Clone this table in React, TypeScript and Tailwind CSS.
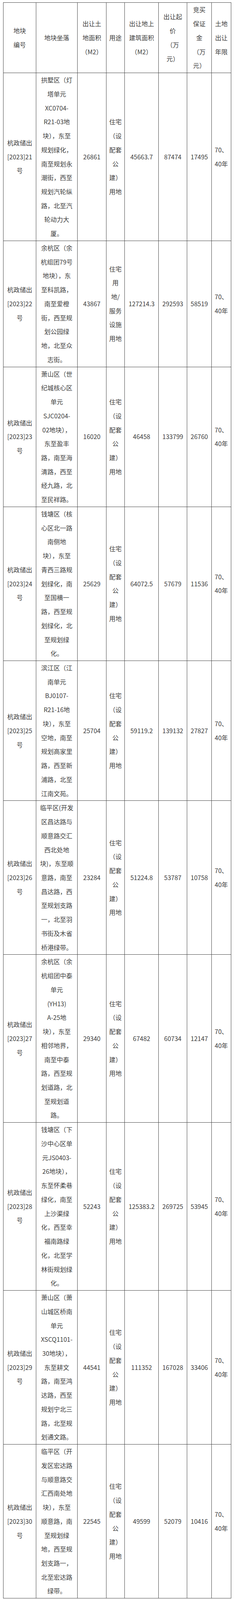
const USE_PUB = ["住宅", "（设", "配套", "公", "建）", "用地"];
const USE_SVC = ["住宅", "用", "地/", "服务", "设施", "用地"];

type Row = {
  no: string;
  loc: string[];
  area: string;
  use: string[];
  build: string;
  price: string;
  deposit: string;
};

// 地块坐落按原图逐行断开
const ROWS: Row[] = [
  {
    no: "21",
    loc: ["拱墅区（灯", "塔单元", "XC0704-", "R21-03地", "块），东至", "规划绿化，", "南至规划永", "潮街，西至", "规划汽轮纵", "路，北至汽", "轮动力大", "厦。"],
    area: "26861", use: USE_PUB, build: "45663.7", price: "87474", deposit: "17495",
  },
  {
    no: "22",
    loc: ["余杭区（余", "杭组团79号", "地块），东", "至科凯路，", "南至爱橙", "街，西至规", "划公园绿", "地，北至众", "志街。"],
    area: "43867", use: USE_SVC, build: "127214.3", price: "292593", deposit: "58519",
  },
  {
    no: "23",
    loc: ["萧山区（世", "纪城核心区", "单元", "SJC0204-", "02地块），", "东至盈丰", "路，南至海", "清路，西至", "经九路，北", "至民祥路。"],
    area: "16020", use: USE_PUB, build: "46458", price: "133799", deposit: "26760",
  },
  {
    no: "24",
    loc: ["钱塘区（核", "心区北一路", "南侧地", "块），东至", "青西三路规", "划绿化，南", "至国横一", "路，西至规", "划绿化，北", "至规划绿", "化。"],
    area: "25629", use: USE_PUB, build: "64072.5", price: "57679", deposit: "11536",
  },
  {
    no: "25",
    loc: ["滨江区（江", "南单元", "BJ0107-", "R21-16地", "块），东至", "空地，南至", "规划高家里", "路，西至新", "浦路，北至", "江南文苑。"],
    area: "25704", use: USE_PUB, build: "59119.2", price: "139132", deposit: "27827",
  },
  {
    no: "26",
    loc: ["临平区(开发", "区昌达路与", "顺意路交汇", "西北处地", "块)，东至顺", "意路，南至", "昌达路，西", "至规划支路", "一，北至羽", "书街及木省", "桥港绿带。"],
    area: "23284", use: USE_PUB, build: "51224.8", price: "53787", deposit: "10758",
  },
  {
    no: "27",
    loc: ["余杭区（余", "杭组团中泰", "单元", "(YH13)", "A-25地", "块），东至", "相邻地界，", "南至中泰", "路，西至规", "划道路，北", "至规划道", "路。"],
    area: "29340", use: USE_PUB, build: "67482", price: "60734", deposit: "12147",
  },
  {
    no: "28",
    loc: ["钱塘区（下", "沙中心区单", "元JS0403-", "26地块），", "东至怀柔巷", "绿化，南至", "上沙渠绿", "化，西至幸", "福南路绿", "化，北至学", "林街规划绿", "化。"],
    area: "52243", use: USE_PUB, build: "125383.2", price: "269725", deposit: "53945",
  },
  {
    no: "29",
    loc: ["萧山区（萧", "山城区桥南", "单元", "XSCQ1101-", "30地块），", "东至耕文", "路，南至鸿", "达路，西至", "规划宁北三", "路，北至规", "划通文路。"],
    area: "44541", use: USE_PUB, build: "111352", price: "167028", deposit: "33406",
  },
  {
    no: "30",
    loc: ["临平区（开", "发区宏达路", "与顺意路交", "汇西南处地", "块），东至", "顺意路，南", "至规划绿", "地，西至规", "划支路一，", "北至宏达路", "绿带。"],
    area: "22545", use: USE_PUB, build: "49599", price: "52079", deposit: "10416",
  },
];

function Lines({ items }: { items: string[] }) {
  return (
    <>
      {items.map((t, i) => (
        <div key={i} className="whitespace-nowrap">{t}</div>
      ))}
    </>
  );
}

function Cell({ children }: { children: React.ReactNode }) {
  return (
    <td className="border border-[#454545] px-0 py-0 text-center align-middle">
      {children}
    </td>
  );
}

export default function App() {
  return (
    <div className="min-h-screen bg-white pt-[0.158vh] pl-[8px] font-['Noto_Sans_CJK_SC','Liberation_Sans',sans-serif] text-[16px] leading-[0.8724vh] text-[#3e3e3e]">
      <table className="table-fixed border-collapse w-[584px]">
        <colgroup>
          <col className="w-[84px]" />
          <col className="w-[106px]" />
          <col className="w-[74px]" />
          <col className="w-[47px]" />
          <col className="w-[87px]" />
          <col className="w-[73px]" />
          <col className="w-[63px]" />
          <col className="w-[50px]" />
        </colgroup>
        <thead>
          <tr>
            <Cell><Lines items={["地块", "编号"]} /></Cell>
            <Cell>地块坐落</Cell>
            <Cell><Lines items={["出让土", "地面积", "（M2）"]} /></Cell>
            <Cell>用途</Cell>
            <Cell><Lines items={["出让地上", "建筑面积", "（M2）"]} /></Cell>
            <Cell><Lines items={["出让起", "价", "（万", "元）"]} /></Cell>
            <Cell><Lines items={["竞买", "保证", "金", "（万", "元）"]} /></Cell>
            <Cell><Lines items={["土地", "出让", "年限"]} /></Cell>
          </tr>
        </thead>
        <tbody>
          {ROWS.map((r) => (
            <tr key={r.no}>
              <Cell><Lines items={["杭政储出", `[2023]${r.no}`, "号"]} /></Cell>
              <Cell><Lines items={r.loc} /></Cell>
              <Cell>{r.area}</Cell>
              <Cell><Lines items={r.use} /></Cell>
              <Cell>{r.build}</Cell>
              <Cell>{r.price}</Cell>
              <Cell>{r.deposit}</Cell>
              <Cell><Lines items={["70、", "40年"]} /></Cell>
            </tr>
          ))}
        </tbody>
      </table>
    </div>
  );
}
